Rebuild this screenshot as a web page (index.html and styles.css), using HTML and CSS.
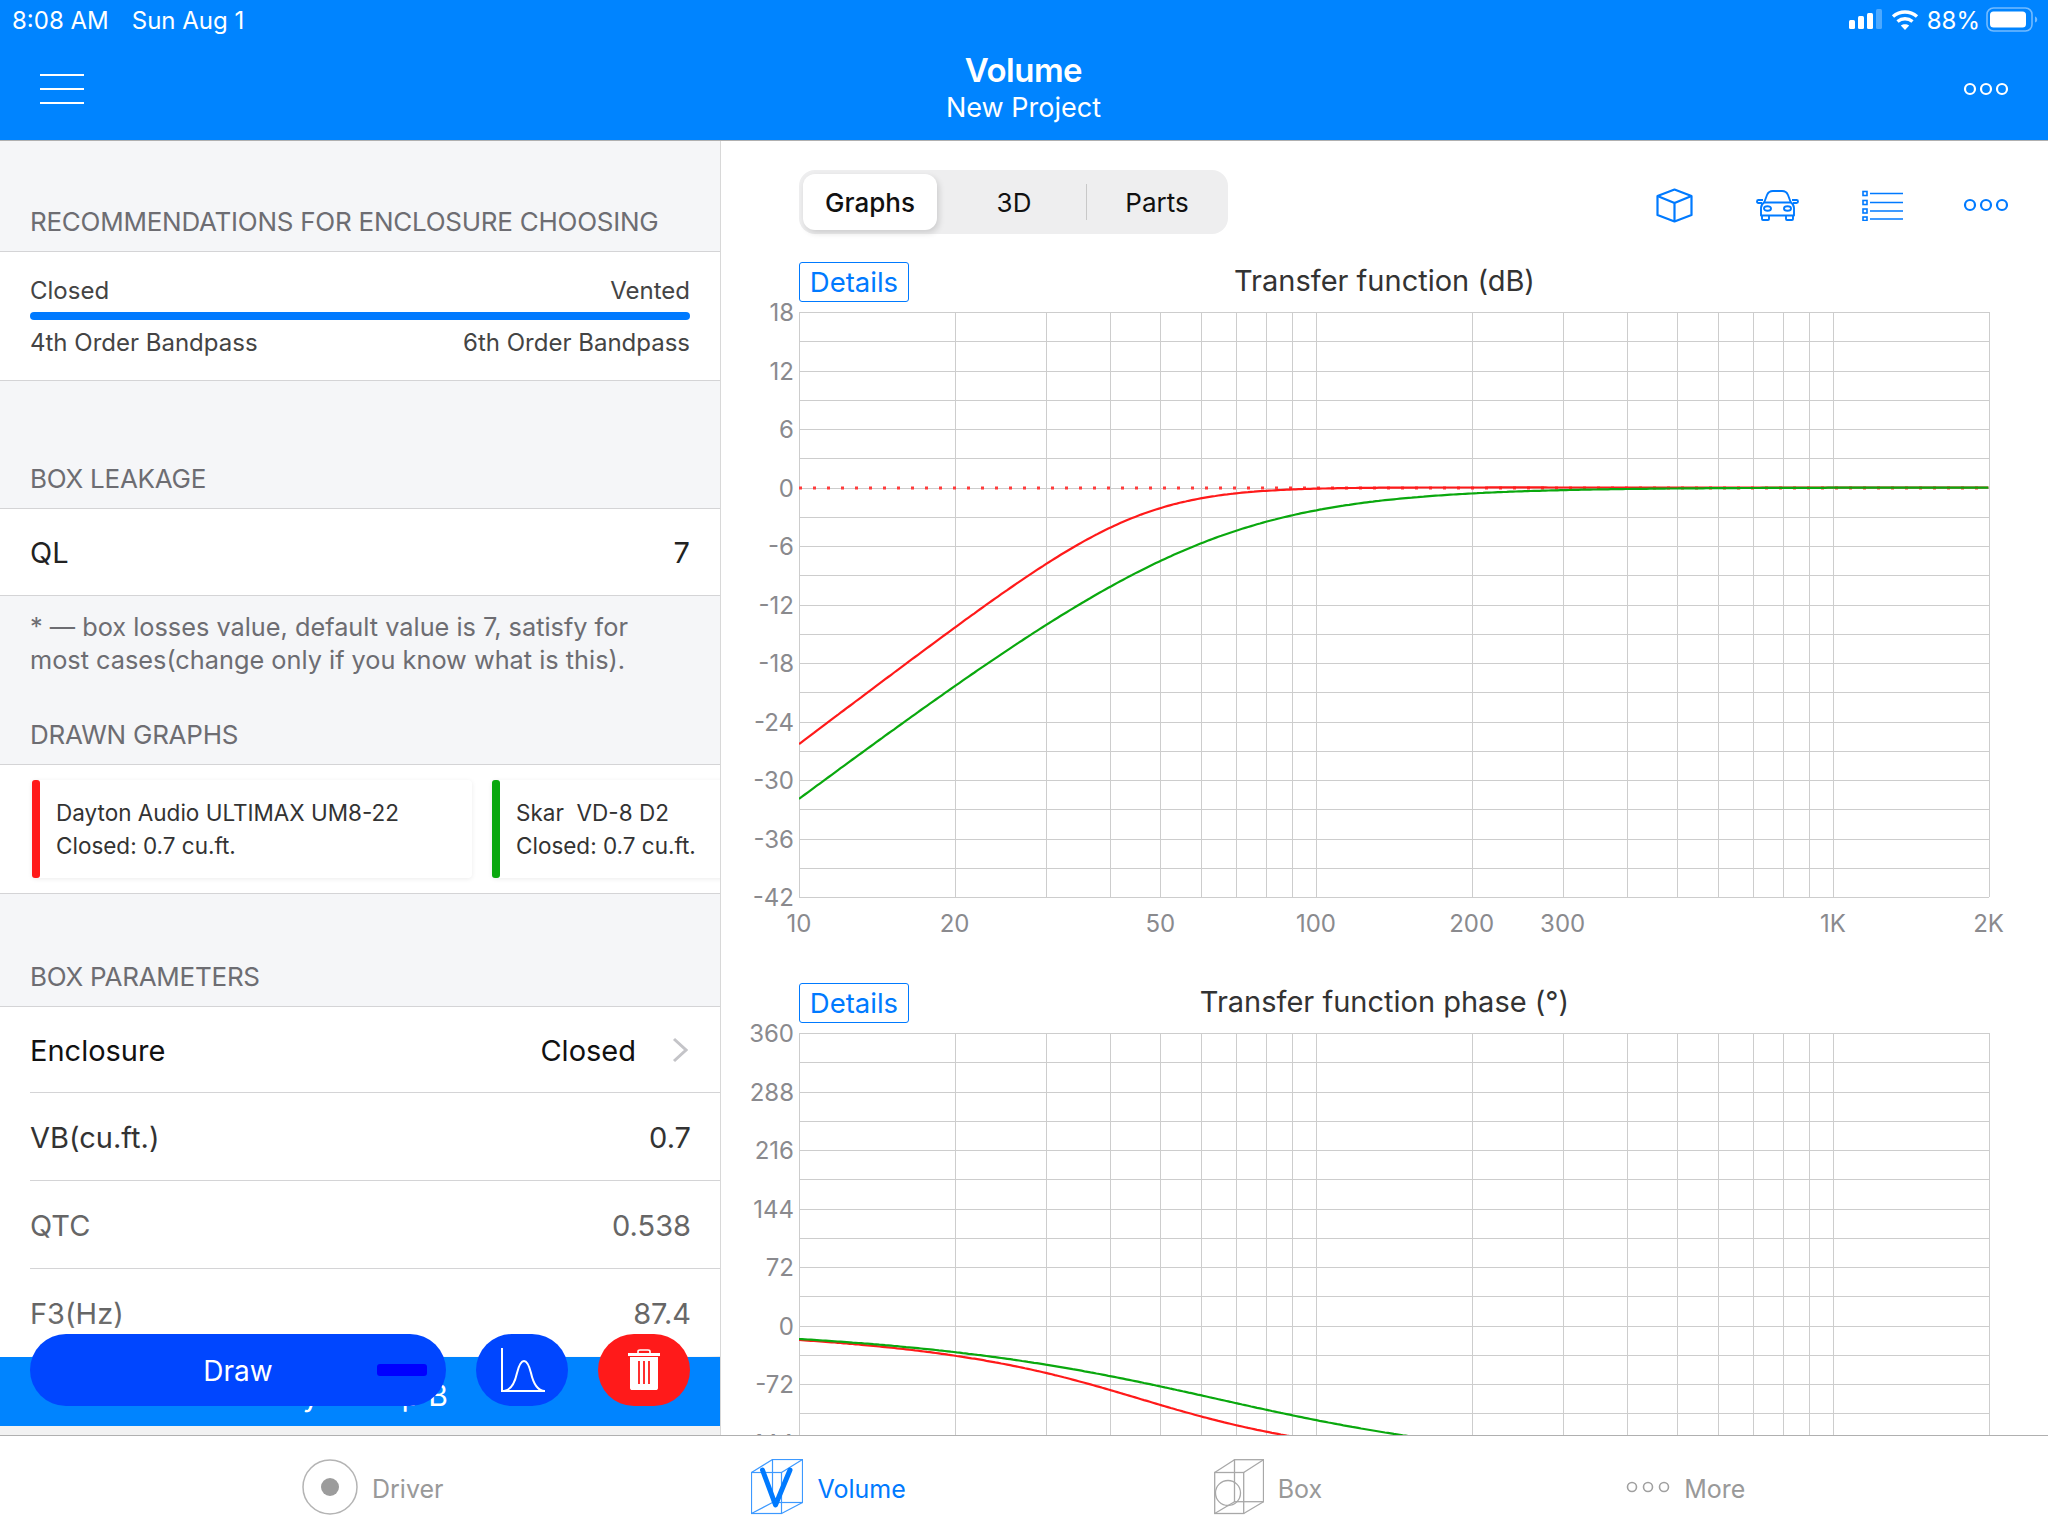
FILE: index.html
```html
<!DOCTYPE html>
<html lang="en">
<head>
  <meta charset="UTF-8">
  <title>Volume - New Project</title>
  <link rel="stylesheet" href="styles.css">
</head>
<body>
  <div class="app">
    <div class="header">
      <div class="status-bar">
        <div class="status-left">
          <span>8:08 AM</span>
          <span>Sun Aug 1</span>
        </div>
        <div class="status-right">
          <svg class="signal" width="33" height="22" viewBox="0 0 33 22">
            <rect x="0" y="11" width="6" height="9" rx="1.5" fill="#fff"/>
            <rect x="9" y="7" width="6" height="13" rx="1.5" fill="#fff"/>
            <rect x="18" y="4" width="6" height="16" rx="1.5" fill="#fff"/>
            <rect x="27" y="0" width="6" height="20" rx="1.5" fill="#fff" opacity="0.3"/>
          </svg>
          <svg class="wifi" width="28" height="22" viewBox="0 0 28 22">
            <path d="M2 7.5C9 1.5 19 1.5 26 7.5" fill="none" stroke="#fff" stroke-width="3.4"/>
            <path d="M6.5 12.5C11 8.8 17 8.8 21.5 12.5" fill="none" stroke="#fff" stroke-width="3.4"/>
            <path d="M14 21L9.8 16.6C12.2 14.8 15.8 14.8 18.2 16.6Z" fill="#fff"/>
          </svg>
          <span class="battery-text">88%</span>
          <svg class="battery" width="52" height="26" viewBox="0 0 52 26">
            <rect x="1" y="1" width="45" height="23" rx="6.5" fill="none" stroke="#fff" stroke-width="1.6" opacity="0.45"/>
            <rect x="4" y="4.5" width="36" height="16" rx="3.5" fill="#fff"/>
            <path d="M49 9.5C50.5 10 51.2 11 51.2 12.5C51.2 14 50.5 15 49 15.5Z" fill="#fff" opacity="0.45"/>
          </svg>
        </div>
      </div>
      <div class="nav-bar">
        <div class="hamburger"><span></span><span></span><span></span></div>
        <div class="nav-title">
          <div class="nav-main">Volume</div>
          <div class="nav-sub">New Project</div>
        </div>
        <svg class="dots dots-white" width="46" height="14" viewBox="0 0 46 14">
          <circle cx="7" cy="7" r="5"/><circle cx="23" cy="7" r="5"/><circle cx="39" cy="7" r="5"/>
        </svg>
      </div>
    </div>

    <div class="main">
      <div class="left-pane">
        <div class="group-label first">RECOMMENDATIONS FOR ENCLOSURE CHOOSING</div>
        <div class="recommend">
          <div class="recommend-line"><span>Closed</span><span>Vented</span></div>
          <div class="recommend-bar"></div>
          <div class="recommend-line"><span>4th Order Bandpass</span><span>6th Order Bandpass</span></div>
        </div>

        <div class="group-label second">BOX LEAKAGE</div>
        <div class="param-row solo"><span>QL</span><span>7</span></div>
        <div class="note">* — box losses value, default value is 7, satisfy for most cases(change only if you know what is this).</div>

        <div class="group-label third">DRAWN GRAPHS</div>
        <div class="cards">
          <div class="graph-card">
            <div class="stripe stripe-red"></div>
            <div class="card-text">
              <div>Dayton Audio ULTIMAX UM8-22</div>
              <div>Closed: 0.7 cu.ft.</div>
            </div>
          </div>
          <div class="graph-card">
            <div class="stripe stripe-green"></div>
            <div class="card-text">
              <div>Skar&nbsp; VD-8 D2</div>
              <div>Closed: 0.7 cu.ft.</div>
            </div>
          </div>
        </div>

        <div class="group-label fourth">BOX PARAMETERS</div>
        <div class="params">
          <div class="param-row dark first-row">
            <span>Enclosure</span>
            <span class="param-value">Closed
              <svg class="chevron" width="16" height="26" viewBox="0 0 16 26"><path d="M2 2L14 13L2 24" fill="none" stroke="#c4c4c8" stroke-width="3"/></svg>
            </span>
          </div>
          <div class="param-row"><span>VB(cu.ft.)</span><span>0.7</span></div>
          <div class="param-row muted"><span>QTC</span><span>0.538</span></div>
          <div class="param-row muted"><span>F3(Hz)</span><span>87.4</span></div>
        </div>

        <div class="action-bar">
          <div class="action-peek">Only 2 Amp B</div>
          <div class="action-buttons">
            <div class="draw-button">Draw<span class="draw-dash"></span></div>
            <div class="round-button round-blue">
              <svg width="46" height="46" viewBox="0 0 46 46">
                <path d="M3 1V44H46" fill="none" stroke="#fff" stroke-width="2"/>
                <path d="M5 44C13 43 16 35 18 26C20 18 22 14 25 14C28 14 30 18 32 26C34 35 37 43 45 44" fill="none" stroke="#fff" stroke-width="2"/>
              </svg>
            </div>
            <div class="round-button round-red">
              <svg width="34" height="42" viewBox="0 0 34 42">
                <path d="M11 4V2.5C11 1.5 12 1 13 1H21C22 1 23 1.5 23 2.5V4" fill="none" stroke="#fff" stroke-width="1.6"/>
                <rect x="1" y="4" width="32" height="3" fill="#fff"/>
                <path d="M3 8H31V39C31 40.5 30 41 29 41H5C4 41 3 40.5 3 39Z" fill="#fff"/>
                <path d="M12 12V35M17 12V35M22 12V35" stroke="#ff1a1a" stroke-width="1.8"/>
              </svg>
            </div>
          </div>
        </div>
      </div>

      <div class="right-pane">
        <div class="toolbar">
          <div class="segments">
            <div class="segment selected">Graphs</div>
            <div class="segment middle">3D</div>
            <div class="segment last"><span>Parts</span></div>
          </div>
          <div class="tools">
            <svg width="37" height="35" viewBox="0 0 37 35" fill="none" stroke="#007aff" stroke-width="2.2" stroke-linejoin="round">
              <path d="M18.5 1.5L35.5 8V27L18.5 33.5L1.5 27V8Z"/>
              <path d="M1.5 8L18.5 15L35.5 8M18.5 15V33.5"/>
            </svg>
            <svg width="43" height="31" viewBox="0 0 43 31" fill="none" stroke="#007aff" stroke-width="1.9" stroke-linejoin="round">
              <path d="M8 13L11 5C12 2.5 14 1 17 1H26C29 1 31 2.5 32 5L35 13"/>
              <path d="M8 12.5H35C37 14 38 15.5 38 18V25.5H5V18C5 15.5 6 14 8 12.5Z"/>
              <path d="M6 13H2.5C0.5 13 0.5 10 2.5 10H7M37 13H40.5C42.5 13 42.5 10 40.5 10H36"/>
              <ellipse cx="11.5" cy="18.5" rx="3.5" ry="2.3"/>
              <ellipse cx="31.5" cy="18.5" rx="3.5" ry="2.3"/>
              <path d="M6 26V29C6 29.5 6.5 30 7 30H12C12.5 30 13 29.5 13 29V26M30 26V29C30 29.5 30.5 30 31 30H36C36.5 30 37 29.5 37 29V26"/>
            </svg>
            <svg width="41" height="31" viewBox="0 0 41 31" fill="none" stroke="#007aff" stroke-width="1.6">
              <rect x="1" y="1.5" width="4" height="4"/><rect x="1" y="10.5" width="4" height="4"/>
              <rect x="1" y="19" width="4" height="4"/><rect x="1" y="27" width="4" height="3.5"/>
              <path d="M8 3.5H41M8 12.5H41M8 21H41M8 29H41"/>
            </svg>
            <svg class="dots dots-blue" width="46" height="14" viewBox="0 0 46 14">
              <circle cx="7" cy="7" r="5"/><circle cx="23" cy="7" r="5"/><circle cx="39" cy="7" r="5"/>
            </svg>
          </div>
        </div>

        <div class="chart">
          <div class="chart-head">
            <div class="details-button">Details</div>
            <div class="chart-title">Transfer function (dB)</div>
          </div>
          <div class="plot" id="gainPlot"></div>
        </div>

        <div class="chart">
          <div class="chart-head">
            <div class="details-button">Details</div>
            <div class="chart-title">Transfer function phase (°)</div>
          </div>
          <div class="plot" id="phasePlot"></div>
        </div>
      </div>
    </div>

    <div class="tab-bar">
      <div class="tab">
        <svg width="56" height="56" viewBox="0 0 56 56">
          <circle cx="28" cy="28" r="27" fill="none" stroke="#b4b4b4" stroke-width="1.5"/>
          <circle cx="28" cy="28" r="9" fill="#9c9c9c"/>
        </svg>
        <span>Driver</span>
      </div>
      <div class="tab active">
        <svg width="52" height="56" viewBox="0 0 52 56" fill="none" stroke="#3d99ff" stroke-width="1.2">
          <rect x="0.5" y="13.5" width="30" height="41"/>
          <rect x="21.5" y="0.5" width="30" height="43"/>
          <path d="M0.5 13.5L21.5 0.5M30.5 13.5L51.5 0.5M0.5 54.5L21.5 43.5M30.5 54.5L51.5 43.5"/>
          <path d="M11.5 11L24.5 46L39 11" stroke="#007aff" stroke-width="5" stroke-linecap="round" stroke-linejoin="round"/>
        </svg>
        <span>Volume</span>
      </div>
      <div class="tab">
        <svg width="50" height="56" viewBox="0 0 50 56" fill="none" stroke="#a8a8a8" stroke-width="1.3">
          <rect x="0.7" y="13.5" width="29" height="41"/>
          <rect x="20.5" y="0.7" width="29" height="42"/>
          <path d="M0.7 13.5L20.5 0.7M29.7 13.5L49.5 0.7M0.7 54.5L20.5 42.7M29.7 54.5L49.5 42.7"/>
          <circle cx="14" cy="34" r="12.5"/>
        </svg>
        <span>Box</span>
      </div>
      <div class="tab more">
        <svg class="dots dots-gray" width="44" height="12" viewBox="0 0 44 12">
          <circle cx="6" cy="6" r="4.5"/><circle cx="22" cy="6" r="4.5"/><circle cx="38" cy="6" r="4.5"/>
        </svg>
        <span>More</span>
      </div>
    </div>
  </div>

  <script src="charts.js"></script>
</body>
</html>
```

FILE: styles.css
```css
* {
  box-sizing: border-box;
}

body {
  margin: 0;
  font-family: Inter, "Noto Sans", sans-serif;
  background: white;
}

.app {
  width: 2048px;
  height: 1536px;
  display: flex;
  flex-direction: column;
  overflow: hidden;
}

/* header */

.header {
  height: 141px;
  flex-shrink: 0;
  background: #0084ff;
  border-bottom: 1px solid #b0b0b0;
  color: white;
}

.status-bar {
  height: 40px;
  display: flex;
  align-items: center;
  justify-content: space-between;
  padding: 0 12px;
  font-size: 24px;
}

.status-left {
  display: flex;
  gap: 23px;
}

.status-right {
  display: flex;
  align-items: center;
}

.signal {
  margin-right: 9px;
}

.battery-text {
  margin: 0 6px 0 8px;
}

.battery {
  margin-right: -2px;
}

.nav-bar {
  height: 100px;
  display: flex;
  align-items: center;
  justify-content: space-between;
  padding: 0 39px 0 40px;
}

.hamburger {
  width: 44px;
  margin-top: -2px;
  display: flex;
  flex-direction: column;
  gap: 12px;
}

.hamburger span {
  height: 2px;
  background: white;
}

.nav-title {
  text-align: center;
  margin-top: -5px;
}

.nav-main {
  font-size: 33px;
  font-weight: 600;
  line-height: 40px;
  letter-spacing: -0.5px;
}

.nav-sub {
  font-size: 27px;
  line-height: 36px;
}

.dots {
  fill: none;
  stroke-width: 2.2;
}

.dots-white {
  stroke: white;
  margin-top: -2px;
}

.dots-blue {
  stroke: #007aff;
  margin-left: -3px;
}

.dots-gray {
  stroke: #a0a0a0;
  stroke-width: 1.6;
}

/* layout */

.main {
  flex: 1;
  min-height: 0;
  display: flex;
  overflow: hidden;
}

.left-pane {
  width: 721px;
  flex-shrink: 0;
  position: relative;
  overflow: hidden;
  background: #f5f6f8;
  border-right: 1px solid #d8d8d8;
}

.right-pane {
  flex: 1;
  min-width: 0;
  background: white;
}

/* left pane */

.group-label {
  padding: 0 30px 14px;
  font-size: 26px;
  line-height: 30px;
  letter-spacing: -0.25px;
  color: #6d6d72;
  border-bottom: 1px solid #d4d4d6;
}

.group-label.first {
  padding-top: 66px;
  height: 111px;
}

.group-label.second {
  padding-top: 83px;
  height: 128px;
}

.group-label.third {
  padding-top: 27px;
  height: 72px;
}

.group-label.fourth {
  padding-top: 68px;
  height: 113px;
}

.recommend {
  height: 129px;
  padding: 24px 30px 0;
  background: white;
  border-bottom: 1px solid #d4d4d6;
}

.recommend-line {
  display: flex;
  justify-content: space-between;
  font-size: 24px;
  line-height: 30px;
  color: #444;
}

.recommend-bar {
  height: 8px;
  margin: 6px 0 8px;
  border-radius: 4px;
  background: #007aff;
}

.param-row {
  height: 88px;
  margin-left: 30px;
  padding: 2px 29px 0 0;
  display: flex;
  align-items: center;
  justify-content: space-between;
  font-size: 29px;
  color: #333;
  border-bottom: 1px solid #d4d4d6;
}

.param-row.solo {
  height: 87px;
  margin-left: 0;
  padding-left: 30px;
  padding-top: 0;
  padding-right: 30px;
  background: white;
  color: #222;
}

.param-row.dark {
  color: #111;
}

.param-row.first-row {
  height: 86px;
  padding-top: 2px;
}

.param-row.muted {
  color: #666;
}

.param-value {
  display: flex;
  align-items: center;
  gap: 36px;
  margin-right: 3px;
}

.chevron {
  margin-top: -2px;
}

.params {
  background: white;
  height: 400px;
}

.note {
  height: 97px;
  padding: 14px 60px 0 30px;
  font-size: 25.3px;
  line-height: 33px;
  color: #6d6d72;
}

.cards {
  height: 129px;
  padding: 15px 0 0 32px;
  display: flex;
  gap: 20px;
  overflow: hidden;
  background: white;
  border-bottom: 1px solid #d4d4d6;
}

.graph-card {
  width: 440px;
  height: 98px;
  flex-shrink: 0;
  display: flex;
  border-radius: 4px;
  background: white;
  box-shadow: 0 1px 5px rgba(0, 0, 0, 0.08);
}

.stripe {
  width: 8px;
  border-radius: 3px;
}

.stripe-red {
  background: #ff1a1a;
}

.stripe-green {
  background: #0aa80e;
}

.card-text {
  padding: 16px 0 0 16px;
  font-size: 22.5px;
  line-height: 33px;
  color: #333;
}

/* action bar over the list */

.action-bar {
  position: absolute;
  left: 0;
  right: 0;
  bottom: 0;
  height: 78px;
  background: #0084ff;
  border-bottom: 9px solid #f2f2f2;
  box-shadow: 0 -18px 20px rgba(255, 255, 255, 0.9);
}

.action-peek {
  position: absolute;
  top: 20px;
  right: 272px;
  font-size: 30px;
  line-height: 36px;
  color: white;
}

.action-buttons {
  position: absolute;
  left: 30px;
  top: -23px;
  display: flex;
  gap: 30px;
}

.draw-button {
  width: 416px;
  height: 72px;
  padding-top: 2px;
  position: relative;
  display: flex;
  align-items: center;
  justify-content: center;
  border-radius: 36px;
  background: #0046ff;
  color: white;
  font-size: 28px;
}

.draw-dash {
  position: absolute;
  right: 19px;
  top: 30px;
  width: 50px;
  height: 12px;
  border-radius: 3px;
  background: #0000ff;
}

.round-button {
  width: 92px;
  height: 72px;
  display: flex;
  align-items: center;
  justify-content: center;
  border-radius: 36px;
}

.round-blue {
  background: #0046ff;
}

.round-red {
  background: #ff1a1a;
}

/* right pane */

.toolbar {
  display: flex;
  justify-content: space-between;
  padding: 29px 39px 0 78px;
}

.segments {
  width: 429px;
  height: 64px;
  padding: 4px 0 4px 4px;
  display: flex;
  border-radius: 16px;
  background: #eeeeef;
  font-size: 26px;
  color: #111;
}

.segment {
  display: flex;
  align-items: center;
  justify-content: center;
}

.segment.selected {
  width: 134px;
  font-weight: 500;
  border-radius: 12px;
  background: white;
  box-shadow: 2px 3px 6px rgba(0, 0, 0, 0.14);
}

.segment.middle {
  width: 149px;
  padding-left: 5px;
}

.segment.last {
  width: 142px;
  position: relative;
}

.segment.last::before {
  content: "";
  position: absolute;
  left: 0;
  top: 10px;
  bottom: 10px;
  width: 1px;
  background: #c8c8c8;
}

.tools {
  display: flex;
  align-items: center;
  gap: 63px;
  margin-top: 6px;
}

.chart {
  margin-top: 28px;
}

.chart + .chart {
  margin-top: 41px;
}

.chart-head {
  height: 40px;
  margin: 0 188px 0 78px;
  display: flex;
  align-items: center;
}

.details-button {
  width: 110px;
  height: 40px;
  display: flex;
  align-items: center;
  justify-content: center;
  border: 1px solid #007aff;
  border-radius: 3px;
  font-size: 27.5px;
  color: #007aff;
}

.chart-title {
  flex: 1;
  margin-top: -3px;
  text-align: center;
  font-size: 29px;
  color: #333;
}

.plot {
  height: 640px;
}

.plot svg {
  display: block;
  overflow: visible;
}

.grid-line {
  stroke: #cdcdcd;
  stroke-width: 1;
  shape-rendering: crispEdges;
}

.axis-label {
  font-size: 24px;
  fill: #8a8a8e;
}

.curve {
  fill: none;
  stroke-width: 2.2;
}

.curve-red {
  stroke: #ff1a1a;
}

.curve-green {
  stroke: #0aa80e;
}

.zero-line {
  stroke: #ff3b3b;
  stroke-width: 3;
  stroke-dasharray: 3 11;
}

/* tab bar */

.tab-bar {
  height: 101px;
  flex-shrink: 0;
  padding-left: 302px;
  display: flex;
  align-items: center;
  gap: 308px;
  background: white;
  border-top: 1px solid #b0b0b0;
}

.tab {
  display: flex;
  align-items: center;
  gap: 14px;
  font-size: 25px;
  color: #999;
}

.tab svg {
  margin-top: 1px;
}

.tab span {
  padding-top: 6px;
}

.tab.active {
  color: #007aff;
}

.tab.more {
  margin-left: -4px;
}
```

FILE: charts.js
```js
// plot area inside each svg, in px
var X0 = 78, DECADE = 517, TOP = 10, STEP = 29.25, ROWS = 20;
var XMAX = X0 + DECADE * Math.log10(200);
var BOTTOM = TOP + STEP * ROWS;

// red = Dayton, green = Skar (closed box, 2nd order)
var DRIVERS = [
  { cls: 'curve-red', fc: 45.5, fcPhase: 45.5, q: 0.72 },
  { cls: 'curve-green', fc: 62.3, fcPhase: 64, q: 0.538 }
];

function xOf(f) {
  return X0 + DECADE * Math.log10(f / 10);
}

function gain(f, d) {
  var x = f / d.fc, x2 = x * x;
  return 20 * Math.log10(x2 / Math.sqrt((1 - x2) * (1 - x2) + x2 / (d.q * d.q)));
}

function phase(f, d) {
  var x = f / d.fcPhase;
  return -Math.atan2(x / d.q, 1 - x * x) * 180 / Math.PI;
}

function curvePath(fn, d, yOf) {
  var pts = [];
  for (var i = 0; i <= 400; i++) {
    var f = 10 * Math.pow(200, i / 400);
    pts.push(xOf(f).toFixed(1) + ' ' + yOf(fn(f, d)).toFixed(1));
  }
  return 'M' + pts.join('L');
}

// opts: top value, value per grid row, last labelled row, x ticks on or off, zero line on or off
function drawPlot(id, fn, opts) {
  var yOf = function (v) { return TOP + (opts.top - v) / opts.perRow * STEP; };
  var clipId = id + 'Clip';
  var html = '<svg width="1326" height="640"><defs><clipPath id="' + clipId + '"><rect x="' + X0 + '" y="' + TOP +
    '" width="' + (XMAX - X0) + '" height="' + (BOTTOM - TOP) + '"/></clipPath></defs>';

  for (var r = 0; r <= ROWS; r++) {
    var y = Math.round(TOP + r * STEP) + 0.5;
    html += '<line class="grid-line" x1="' + X0 + '" x2="' + XMAX + '" y1="' + y + '" y2="' + y + '"/>';
    if (r % 2 == 0 && r <= opts.lastLabel) {
      html += '<text class="axis-label" text-anchor="end" dominant-baseline="central" x="73" y="' + y + '">' + (opts.top - r * opts.perRow) + '</text>';
    }
  }

  var freqs = [10, 20, 30, 40, 50, 60, 70, 80, 90, 100, 200, 300, 400, 500, 600, 700, 800, 900, 1000, 2000];
  freqs.forEach(function (f) {
    var x = Math.round(xOf(f)) + 0.5;
    html += '<line class="grid-line" x1="' + x + '" x2="' + x + '" y1="' + TOP + '" y2="' + BOTTOM + '"/>';
  });

  if (opts.ticks) {
    var ticks = { 10: '10', 20: '20', 50: '50', 100: '100', 200: '200', 300: '300', 1000: '1K', 2000: '2K' };
    Object.keys(ticks).forEach(function (f) {
      html += '<text class="axis-label" text-anchor="middle" dominant-baseline="central" x="' + xOf(+f) + '" y="621">' + ticks[f] + '</text>';
    });
  }

  if (opts.zero) {
    var zero = Math.round(yOf(0));
    html += '<line class="zero-line" x1="' + X0 + '" x2="' + XMAX + '" y1="' + zero + '" y2="' + zero + '"/>';
  }
  html += '<g clip-path="url(#' + clipId + ')">';
  DRIVERS.forEach(function (d) {
    html += '<path class="curve ' + d.cls + '" d="' + curvePath(fn, d, yOf) + '"/>';
  });
  html += '</g></svg>';
  document.getElementById(id).innerHTML = html;
}

drawPlot('gainPlot', gain, { top: 18, perRow: 3, lastLabel: 20, ticks: true, zero: true });
// rest of the phase plot is under the tab bar
drawPlot('phasePlot', phase, { top: 360, perRow: 36, lastLabel: 14, ticks: false, zero: false });
```
